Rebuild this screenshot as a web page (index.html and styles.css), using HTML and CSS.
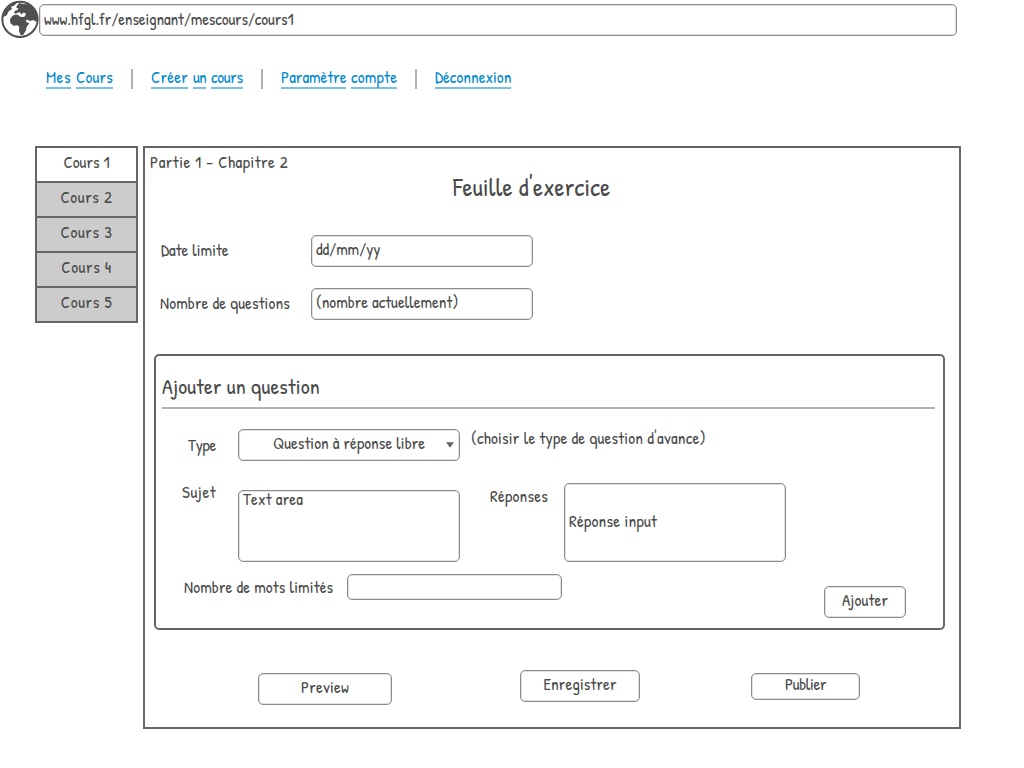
FILE: index.html
```html
<!DOCTYPE html>
<html lang="fr">
<head>
<meta charset="utf-8">
<title>Feuille d'exercice</title>
<link rel="stylesheet" href="styles.css">
</head>
<body>
<header class="address">
  <svg class="globe" viewBox="0 0 120 120" aria-hidden="true">
    <circle cx="60" cy="58" r="53" fill="#fff" stroke="#505050" stroke-width="6"/>
    <path fill="#505050" d="M9 52 L14 34 L28 18 L45 7 L51 8 L42 17 L33 20 L36 27 L26 34 L20 46 Z"/>
    <path fill="#505050" d="M50 18 L58 9 L70 12 L88 13 L103 26 L112 45 L113 60 L106 66 L102 60 L89 63 L84 60 L77 59 L80 67 L88 70 L80 80 L78 91 L70 104 L62 106 L57 93 L58 82 L53 76 L40 77 L31 69 L30 58 L37 48 L44 44 L54 44 L60 50 L72 51 L76 47 L77 39 L68 38 L66 44 L58 36 L53 38 L47 41 L42 39 L45 32 L53 30 L55 24 L49 25 Z"/>
  </svg>
  <div class="box url"><span class="t-url">www.hfgl.fr/enseignant/mescours/cours1</span></div>
</header>
<nav class="menu">
  <a class="link"><span class="w-mes">Mes</span><span class="w-cours">Cours</span></a>
  <a class="link"><span class="w-creer">Créer</span><span class="w-un">un</span><span class="w-cours2">cours</span></a>
  <a class="link"><span class="w-param">Paramètre</span><span class="w-compte">compte</span></a>
  <a class="link"><span class="w-deco">Déconnexion</span></a>
</nav>
<div class="layout">
  <aside class="tabs">
    <div class="tab active">Cours 1</div>
    <div class="tab">Cours 2</div>
    <div class="tab">Cours 3</div>
    <div class="tab">Cours 4</div>
    <div class="tab">Cours 5</div>
  </aside>
  <main class="sheet">
    <div class="crumb">Partie 1 – Chapitre 2</div>
    <h1 class="title">Feuille d'exercice</h1>
    <div class="field date">
      <label class="label t-date">Date limite</label>
      <div class="box input"><span class="t-ddmm">dd/mm/yy</span></div>
    </div>
    <div class="field count">
      <label class="label t-count">Nombre de questions</label>
      <div class="box input"><span class="t-current">(nombre actuellement)</span></div>
    </div>
    <section class="panel">
      <h2 class="panel-title">Ajouter un question</h2>
      <div class="row type">
        <label class="type-label">Type</label>
        <div class="box select">
          <span class="t-select">Question à réponse libre</span>
          <svg class="caret" viewBox="0 0 8 6" aria-hidden="true"><path d="M0 0.3H8L4 5.7Z" fill="#666"/></svg>
        </div>
        <span class="hint">(choisir le type de question d'avance)</span>
      </div>
      <div class="row answer">
        <label class="subject-label">Sujet</label>
        <div class="box textarea"><span class="t-area">Text area</span></div>
        <label class="answer-label">Réponses</label>
        <div class="box answer-box">Réponse input</div>
      </div>
      <div class="row words">
        <label class="words-label">Nombre de mots limités</label>
        <div class="box words-box"></div>
        <div class="box button add">Ajouter</div>
      </div>
    </section>
    <div class="actions">
      <div class="box button preview">Preview</div>
      <div class="box button save">Enregistrer</div>
      <div class="box button publish">Publier</div>
    </div>
  </main>
</div>
</body>
</html>
```
FILE: styles.css
```css
* { box-sizing: border-box; }

body {
  margin: 0;
  width: 1024px;
  height: 768px;
  overflow: hidden;
  background: #fff;
  color: #4a4a4a;
  font: 17px/16px "Patrick Hand", Lato, sans-serif;
  font-variant-ligatures: none;
  white-space: nowrap;
}

.box {
  border: 1px solid #8c8c8c;
  border-radius: 5px;
  box-shadow: inset 0 0 0 1px #e0e0e0;
  background: #fff;
  flex: none;
}

/* Address bar */
.address { display: flex; height: 40px; }
.globe { width: 40px; height: 40px; margin-right: -1px; flex: none; }
.url { width: 918px; height: 32px; margin-top: 4px; padding: 6px 4px; }
.t-url { letter-spacing: -0.15px; }

/* Navigation */
.menu { display: flex; height: 20px; margin: 29px 0 57px 46px; color: #0089cf; }
.link { display: flex; gap: 5px; }
.link + .link { margin-left: 18px; padding-left: 18px; border-left: 2px solid #b2b2b2; }
.link span { height: 20px; border-bottom: 2px solid #79bfe6; }
.w-mes { width: 25px; letter-spacing: 0.5px; }
.w-cours { width: 37px; letter-spacing: 0.2px; }
.w-creer { width: 37px; letter-spacing: 0.2px; }
.w-un { width: 13px; letter-spacing: -0.7px; }
.w-cours2 { width: 32px; letter-spacing: -0.3px; }
.w-param { width: 65px; }
.w-compte { width: 46px; letter-spacing: 0.2px; }
.w-deco { width: 76px; }

/* Course tabs */
.layout { display: flex; align-items: flex-start; gap: 5px; padding-left: 35px; }
.tabs { width: 103px; border: 2px solid #666; border-bottom: 0; }
.tab {
  height: 35px;
  padding-top: 6px;
  border-bottom: 2px solid #666;
  background: #ccc;
  text-align: center;
  letter-spacing: 0.6px;
}
.tab.active { background: #fff; letter-spacing: 0; }

/* Exercise sheet */
.sheet { width: 818px; height: 583px; border: 2px solid #666; }
.crumb { height: 20px; margin: 6px 0 0 5px; letter-spacing: 0.48px; }
.title {
  margin: -1px 0 0 308px;
  font-size: 25px;
  line-height: 28px;
  font-weight: normal;
  letter-spacing: 0.22px;
}
.field { display: flex; height: 32px; padding-left: 15px; }
.date { margin-top: 34px; }
.count { margin-top: 21px; }
.label { width: 151px; padding-top: 7px; }
.t-date { padding-left: 1px; }
.t-count { letter-spacing: 0.12px; }
.input { width: 222px; padding: 5px 4px; }
.t-ddmm { letter-spacing: -0.1px; }
.t-current { letter-spacing: 0; }

/* Question panel */
.panel {
  width: 791px;
  height: 276px;
  margin: 34px 0 0 9px;
  border: 2px solid #666;
  border-radius: 5px;
}
.panel-title {
  width: 773px;
  height: 53px;
  margin: 0 0 0 6px;
  padding-top: 16px;
  border-bottom: 2px solid #b2b2b2;
  font-size: 22px;
  line-height: 28px;
  font-weight: normal;
  letter-spacing: 0.17px;
}
.row { display: flex; align-items: flex-start; }
.type { margin-top: 20px; }
.type-label { width: 50px; margin: 8px 0 0 32px; letter-spacing: -0.3px; }
.select { display: flex; width: 222px; height: 32px; padding: 5px 5px 0 34px; }
.t-select { letter-spacing: 0.05px; }
.caret { width: 8px; height: 6px; margin: 7px 0 0 auto; }
.hint { margin: 1px 0 0 11px; letter-spacing: 0.2px; }

.answer { margin-top: 22px; }
.subject-label { width: 56px; margin: 1px 0 0 26px; letter-spacing: 0.6px; }
.textarea { width: 222px; height: 72px; margin-top: 7px; padding: 1px 4px; line-height: 14px; }
.t-area { letter-spacing: 0.15px; }
.answer-label { width: 74px; margin: 5px 0 0 30px; letter-spacing: 0.25px; }
.answer-box { width: 222px; height: 79px; padding: 29px 4px; letter-spacing: 0.25px; }

.words { margin-top: 12px; }
.words-label { width: 163px; margin: 5px 0 0 28px; letter-spacing: 0.12px; }
.words-box { width: 215px; height: 26px; }
.button { text-align: center; padding-top: 5px; }
.add { width: 82px; height: 32px; margin: 12px 0 0 262px; letter-spacing: 0.15px; }

/* Sheet actions */
.actions { display: flex; align-items: flex-start; padding: 40px 0 0 113px; }
.preview { width: 134px; height: 32px; margin-top: 3px; letter-spacing: 0.2px; }
.save { width: 120px; height: 32px; margin-left: 128px; letter-spacing: 0.1px; }
.publish { width: 109px; height: 27px; margin: 3px 0 0 111px; padding-top: 2px; letter-spacing: -0.35px; }
```
